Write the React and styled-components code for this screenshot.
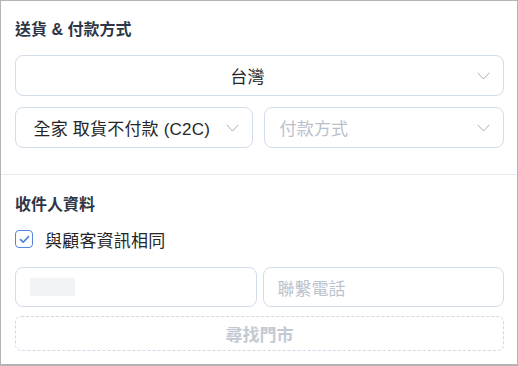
import React from 'react';
import styled, { createGlobalStyle } from 'styled-components';

const GlobalStyle = createGlobalStyle`
  html, body {
    margin: 0;
    padding: 0;
    background: #ffffff;
  }
  body {
    font-family: "Liberation Sans", "Noto Sans CJK TC", sans-serif;
  }
`;

const Frame = styled.div`
  box-sizing: border-box;
  width: 518px;
  height: 366px;
  border: 1px solid #b4b4b4;
  border-bottom-width: 2px;
  background: #fff;
  overflow: hidden;
`;

const Section = styled.section`
  display: flex;
  flex-direction: column;
  padding: ${(p) => p.$pad};
  border-bottom: ${(p) => (p.$divider ? '1px solid #e5ecf4' : 'none')};
`;

const Title = styled.h3`
  margin: 0;
  font-size: 16px;
  line-height: 24px;
  font-weight: 700;
  color: #2d3646;
`;

const Row = styled.div`
  display: flex;
  gap: ${(p) => p.$gap}px;
  margin-top: ${(p) => p.$mt}px;
`;

const Select = styled.div`
  box-sizing: border-box;
  flex: 1;
  height: 41px;
  display: flex;
  align-items: center;
  padding: 0 13px 0 ${(p) => (p.$placeholder ? 15 : 12)}px;
  border: 1px solid #d3dde9;
  border-radius: 8px;
  background: #fff;
`;

const SelectText = styled.span`
  flex: 1;
  text-align: ${(p) => (p.$placeholder ? 'left' : 'center')};
  font-size: 17px;
  letter-spacing: 0.2px;
  color: ${(p) => (p.$placeholder ? '#b9c0cb' : '#262626')};
  white-space: nowrap;
  padding-right: ${(p) => (p.$placeholder ? 0 : 10)}px;
`;

const Chevron = styled.svg`
  width: 13px;
  height: 8px;
  flex: none;
`;

const CheckRow = styled.label`
  display: flex;
  align-items: center;
  gap: 12px;
  margin-top: 10px;
  height: 24px;
  font-size: 17px;
  letter-spacing: 0.2px;
  color: #262626;
`;

const Box = styled.span`
  box-sizing: border-box;
  width: 18px;
  height: 18px;
  border: 1.5px solid #5486e3;
  border-radius: 4px;
  display: flex;
  align-items: center;
  justify-content: center;
`;

const Input = styled.div`
  box-sizing: border-box;
  flex: 1;
  height: 40px;
  display: flex;
  align-items: center;
  padding: 0 14px;
  border: 1px solid #d3dde9;
  border-radius: 8px;
  font-size: 17px;
  color: #bcc3ce;
`;

const Redacted = styled.span`
  width: 45px;
  height: 18px;
  background: #f1f3f6;
`;

const FindButton = styled.div`
  box-sizing: border-box;
  height: 35px;
  margin-top: 9px;
  display: flex;
  align-items: center;
  justify-content: center;
  border: 1px dashed #cfd9e6;
  border-radius: 6px;
  font-size: 17px;
  font-weight: 700;
  color: #c3c9d3;
`;

const Arrow = () => (
  <Chevron viewBox="0 0 13 8">
    <path d="M0.7 0.8 L6.5 7 L12.3 0.8" fill="none" stroke="#a9adb3" strokeWidth="1" />
  </Chevron>
);

const Check = () => (
  <svg width="11" height="9" viewBox="0 0 11 9">
    <path d="M1.5 4.6 L4.2 7.2 L9.5 1.6" fill="none" stroke="#4a7fe0" strokeWidth="1.6" strokeLinecap="round" strokeLinejoin="round" />
  </svg>
);

export default function App() {
  return (
    <>
      <GlobalStyle />
      <Frame>
        <Section $pad="17px 13px 26px 14px" $divider>
          <Title>送貨 &amp; 付款方式</Title>
          <Row $gap={0} $mt={13}>
            <Select>
              <SelectText>台灣</SelectText>
              <Arrow />
            </Select>
          </Row>
          <Row $gap={11} $mt={11}>
            <Select>
              <SelectText>全家 取貨不付款 (C2C)</SelectText>
              <Arrow />
            </Select>
            <Select $placeholder>
              <SelectText $placeholder>付款方式</SelectText>
              <Arrow />
            </Select>
          </Row>
        </Section>
        <Section $pad="18px 13px 0 14px">
          <Title>收件人資料</Title>
          <CheckRow>
            <Box>
              <Check />
            </Box>
            與顧客資訊相同
          </CheckRow>
          <Row $gap={6} $mt={16}>
            <Input>
              <Redacted />
            </Input>
            <Input>聯繫電話</Input>
          </Row>
          <FindButton>尋找門市</FindButton>
        </Section>
      </Frame>
    </>
  );
}
